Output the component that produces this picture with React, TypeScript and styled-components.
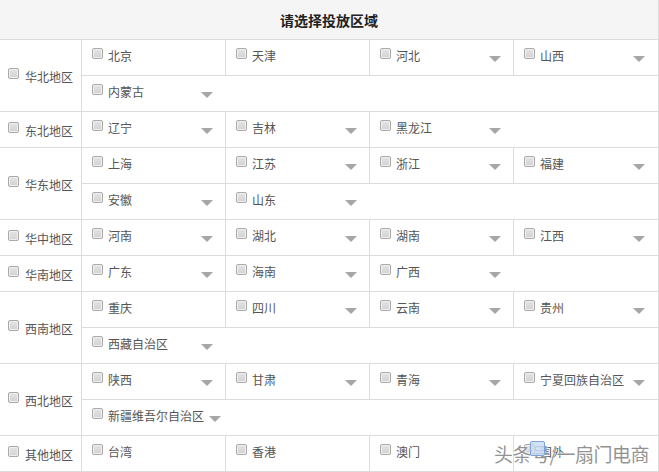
import { FC } from 'react'
import styled, { createGlobalStyle } from 'styled-components'


const GlobalStyle = createGlobalStyle`
  html, body {
    margin: 0;
    padding: 0;
    background: #fff;
  }
  body {
    font-family: "Noto Sans CJK SC", "Noto Sans", sans-serif;
    font-size: 12px;
    color: #555;
  }
`

const Table = styled.div`
  position: relative;
  width: 658px;
  border-right: 1px solid #dcdcdc;
  box-sizing: content-box;
`

const Header = styled.div`
  height: 39px;
  display: flex;
  align-items: center;
  justify-content: center;
  background: #f5f5f5;
  border-bottom: 1px solid #dcdcdc;
  font-size: 14px;
  font-weight: bold;
  color: #222;
`

const RegionRow = styled.div`
  display: flex;
  border-bottom: 1px solid #dcdcdc;
`

const RegionLabel = styled.div`
  width: 82px;
  flex-shrink: 0;
  display: flex;
  align-items: center;
  gap: 6px;
  padding-left: 8px;
  box-sizing: border-box;
  border-right: 1px solid #dcdcdc;
`

const Lines = styled.div`
  flex: 1;
  display: flex;
  flex-direction: column;
`

const Line = styled.div`
  display: flex;
  height: 35px;
  & + & {
    border-top: 1px solid #dcdcdc;
  }
`

const Item = styled.div`
  width: 144px;
  box-sizing: border-box;
  display: flex;
  align-items: flex-start;
  padding: 8px 0 0 10px;
  border-right: 1px solid #dcdcdc;
  &:last-child {
    border-right: none;
  }
`

const Box = styled.span<{ $up?: number }>`
  width: 11px;
  height: 11px;
  box-sizing: border-box;
  flex-shrink: 0;
  border: 1px solid #a9a9a9;
  border-radius: 2px;
  background: linear-gradient(#e4e4e4, #d2d2d2);
  box-shadow: inset 0 0 0 1px #f0f0f0;
  margin-top: ${p => p.$up ?? 0}px;
`

const ItemLabel = styled.span`
  min-width: 88px;
  margin-left: 5px;
  margin-top: 1px;
  line-height: 14px;
  white-space: nowrap;
`

const RegionName = styled.span`
  line-height: 14px;
  margin-top: 2px;
`

const Arrow = styled.span`
  width: 0;
  height: 0;
  margin: 8px 0 0 5px;
  border-left: 6px solid transparent;
  border-right: 6px solid transparent;
  border-top: 6px solid #a6a6a6;
`

const Watermark = styled.div`
  position: absolute;
  right: 9px;
  bottom: 5px;
  display: flex;
  align-items: center;
  font-size: 19px;
  letter-spacing: -0.5px;
  color: rgba(110, 110, 110, 0.75);
  text-shadow: 0 0 2px #fff, 0 0 1px #fff;
  white-space: nowrap;
`

const Badge = styled.span`
  position: absolute;
  left: 36px;
  top: 1px;
  width: 13px;
  height: 13px;
  border: 1px solid #7ea3d6;
  border-radius: 2px;
  background: rgba(200, 220, 245, 0.8);
`


interface ICity {
  name: string
  sub: boolean
}

interface IRegion {
  name: string
  cities: ICity[]
}

const c = (name: string, sub = true): ICity => ({ name, sub })

const regions: IRegion[] = [
  { name: '华北地区', cities: [c('北京', false), c('天津', false), c('河北'), c('山西'), c('内蒙古')] },
  { name: '东北地区', cities: [c('辽宁'), c('吉林'), c('黑龙江')] },
  { name: '华东地区', cities: [c('上海', false), c('江苏'), c('浙江'), c('福建'), c('安徽'), c('山东')] },
  { name: '华中地区', cities: [c('河南'), c('湖北'), c('湖南'), c('江西')] },
  { name: '华南地区', cities: [c('广东'), c('海南'), c('广西')] },
  { name: '西南地区', cities: [c('重庆', false), c('四川'), c('云南'), c('贵州'), c('西藏自治区')] },
  { name: '西北地区', cities: [c('陕西'), c('甘肃'), c('青海'), c('宁夏回族自治区'), c('新疆维吾尔自治区')] },
  { name: '其他地区', cities: [c('台湾', false), c('香港', false), c('澳门', false), c('国外', false)] },
]

const chunk = (list: ICity[]) => {
  const out: ICity[][] = []
  for (let i = 0; i < list.length; i += 4) out.push(list.slice(i, i + 4))
  return out
}


const Region: FC<{ region: IRegion }> = ({ region }) => (
  <RegionRow>
    <RegionLabel>
      <Box $up={-4} />
      <RegionName>{region.name}</RegionName>
    </RegionLabel>
    <Lines>
      {chunk(region.cities).map((line, i) => (
        <Line key={i}>
          {line.map(city => (
            <Item key={city.name}>
              <Box />
              <ItemLabel>{city.name}</ItemLabel>
              {city.sub && <Arrow />}
            </Item>
          ))}
        </Line>
      ))}
    </Lines>
  </RegionRow>
)


const App: FC = () => (
  <>
    <GlobalStyle />
    <Table>
      <Header>请选择投放区域</Header>
      {regions.map(r => <Region key={r.name} region={r} />)}
      <Watermark>
        <Badge />
        头条号/一扇门电商
      </Watermark>
    </Table>
  </>
)


export default App
